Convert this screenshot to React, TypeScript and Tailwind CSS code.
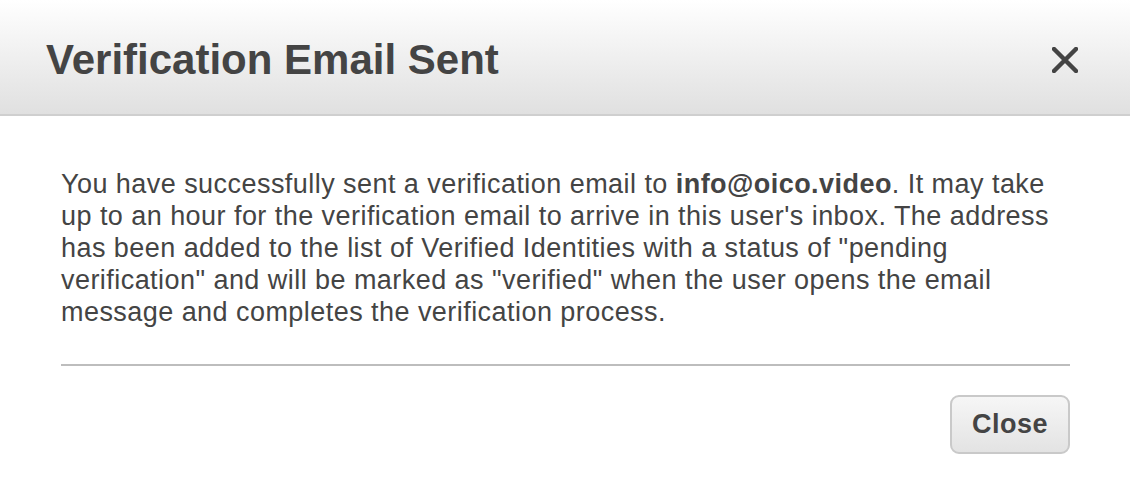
const App = () => {
  return (
    <div
      className="w-[1130px] h-[492px] bg-white text-[#444]"
      style={{ fontFamily: '"Liberation Sans", Arial, sans-serif' }}
    >
      <div className="h-[116px] flex items-center justify-between pl-[46px] pr-[52px] bg-gradient-to-b from-white to-[#e0e0e0] border-b-2 border-[#cfcfcf]">
        <h1 className="text-[42px] font-bold pt-[4px]">Verification Email Sent</h1>
        <button className="w-[26px] h-[26px] mt-[6px] flex items-center justify-center">
          <svg width="26" height="26" viewBox="0 0 26 26">
            <path d="M2 2 L24 24 M24 2 L2 24" stroke="#444" strokeWidth="4.5" strokeLinecap="round" />
          </svg>
        </button>
      </div>
      <div className="px-[61px] pt-[52px]">
        <p className="text-[27px] leading-[32px] tracking-[0.45px] w-[1000px]">
          You have successfully sent a verification email to <b>info@oico.video</b>. It may take up to an
          hour for the verification email to arrive in this user's inbox. The address has been added to
          the list of Verified Identities with a status of "pending verification" and will be marked as
          "verified" when the user opens the email message and completes the verification process.
        </p>
        <div className="mt-[36px] h-[2px] bg-[#bdbdbd] w-[1009px]" />
        <div className="flex justify-end w-[1009px] pt-[29px]">
          <button className="w-[120px] h-[59px] rounded-[9px] border-2 border-[#c9c9c9] bg-gradient-to-b from-[#f6f6f6] to-[#e3e3e3] text-[27px] tracking-[0.5px] font-bold text-[#444]">
            Close
          </button>
        </div>
      </div>
    </div>
  );
};

export default App;
